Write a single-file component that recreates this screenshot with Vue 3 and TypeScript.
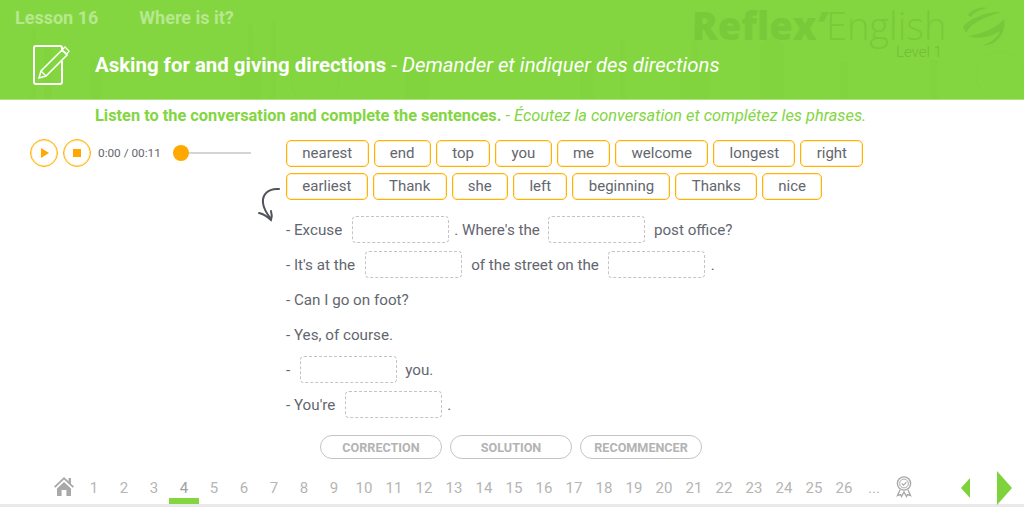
<script setup lang="ts">
const rows: string[][] = [
  ["nearest", "end", "top", "you", "me", "welcome", "longest", "right"],
  ["earliest", "Thank", "she", "left", "beginning", "Thanks", "nice"],
];

type Part = { text?: string; blank?: boolean; cls?: string };
const lines: Part[][] = [
  [{ text: "- Excuse", cls: "r10" }, { blank: true }, { text: ". Where's the", cls: "l5 r8" }, { blank: true }, { text: "post office?", cls: "l9" }],
  [{ text: "- It's at the", cls: "r10" }, { blank: true }, { text: "of the street on the", cls: "l9 r9" }, { blank: true }, { text: ".", cls: "l6" }],
  [{ text: "- Can I go on foot?" }],
  [{ text: "- Yes, of course." }],
  [{ text: "-", cls: "r10" }, { blank: true }, { text: "you.", cls: "l8" }],
  [{ text: "- You're", cls: "r10" }, { blank: true }, { text: ".", cls: "l5" }],
];

const actions = ["CORRECTION", "SOLUTION", "RECOMMENCER"];
const pages = Array.from({ length: 26 }, (_, i) => i + 1);
const current = 4;
</script>

<template>
  <div class="page">
    <header class="banner">
      <svg class="skyline" viewBox="0 0 1024 100" preserveAspectRatio="none">
        <path d="M30 100V30h6v70zM44 100V45h8v55zM90 100V60h12v40zM240 100V60h8V25h5v35h8v40zM270 100V22h6v78zM405 100V70h24v30zM580 100V60h14v40zM620 100V40h6v60zM680 100V70h10l5-50 5 50h10v30zM760 100V45l12-10 12 10v55zM840 100V62h8v38zM930 100V60h8v40z" fill="#7ccf3d" />
        <circle cx="315" cy="82" r="24" fill="none" stroke="#7ccf3d" />
        <circle cx="1000" cy="76" r="24" fill="none" stroke="#7ccf3d" />
      </svg>
      <div class="crumbs">
        <span class="lesson">Lesson 16</span>
        <span>Where is it?</span>
      </div>
      <div class="heading">
        <svg class="note" width="40" height="42" viewBox="0 0 40 42" fill="none" stroke="#fff">
          <path d="M30 17v21a2 2 0 0 1-2 2H4a2 2 0 0 1-2-2V4a2 2 0 0 1 2-2h24a2 2 0 0 1 2 2v4" stroke-width="2" />
          <path d="M7 34l2-7L30 6l5 5-21 21z" stroke-width="1.500" />
          <path d="M9 27l5 5M33 3l4 4-2 3-5-4z" stroke-width="1.300" />
        </svg>
        <h1>Asking for and giving directions <span class="dash">-</span> <em>Demander et indiquer des directions</em></h1>
      </div>
      <div class="logo">
        <span class="brand"><b>Reflex</b><i>’</i>English</span>
        <svg class="swoosh" width="44" height="44" viewBox="0 0 44 44" fill="#76c93b">
          <path d="M7 12C10 7 20 3 27 5C20 6 13 9 10 14Z" />
          <path d="M2 24C8 15 28 8 40 9C30 13 12 17 5 30Z" />
          <path d="M7 33C20 32 36 24 43 16C46 30 34 44 22 42C30 40 37 34 39 28C32 33 18 37 7 33Z" />
        </svg>
        <span class="level">Level 1</span>
      </div>
    </header>

    <p class="instruction"><b>Listen to the conversation and complete the sentences.</b> - <em>Écoutez la conversation et complétez les phrases.</em></p>

    <main class="body">
      <aside class="player">
        <button class="round"><span class="play"></span></button>
        <button class="round"><span class="stop"></span></button>
        <span class="time">0:00 / 00:11</span>
        <div class="track"><span class="thumb"></span></div>
      </aside>

      <section class="exercise">
        <svg class="arrow" width="24" height="36" viewBox="0 0 24 36" fill="none" stroke="#50535a" stroke-width="2" stroke-linecap="round">
          <path d="M22 2C12 1 5 7 6 16c.6 6 4 11 8 16" />
          <path d="M2 26c4 1 8 3 12 7 1-3 1-6 0-9" />
        </svg>
        <div class="bank">
          <div v-for="(row, r) in rows" :key="r" class="chips">
            <span v-for="word in row" :key="word" class="chip">{{ word }}</span>
          </div>
        </div>
        <div class="lines">
          <div v-for="(line, i) in lines" :key="i" class="line">
            <template v-for="(part, j) in line" :key="j">
              <span v-if="part.blank" class="blank"></span>
              <span v-else :class="part.cls">{{ part.text }}</span>
            </template>
          </div>
        </div>
        <div class="actions">
          <button v-for="a in actions" :key="a" class="action">{{ a }}</button>
        </div>
      </section>
    </main>

    <nav class="pager">
      <svg class="home" width="20" height="20" viewBox="0 0 20 20" fill="#a9a9a9">
        <path d="M10 1L0 10.500l1.300 1.200L10 3.600l8.700 8.100 1.300-1.200-3-2.800V2h-2.400v3.300z" />
        <path d="M3 12.500L10 6l7 6.500V20h-4.600v-6H7.600v6H3z" />
      </svg>
      <div class="nums">
        <span v-for="p in pages" :key="p" class="num" :class="{ on: p === current }">{{ p }}</span>
        <span class="num dots">...</span>
      </div>
      <svg class="badge" width="16" height="22" viewBox="0 0 16 22" fill="none" stroke="#a9a9a9">
        <circle cx="8" cy="7.500" r="6.600" stroke-width="1.400" />
        <circle cx="8" cy="7.500" r="4.400" stroke-width="1" />
        <path d="M5.800 7.500l1.700 1.700 3-3" stroke-width="1.200" />
        <path d="M4 14l-2.500 5.500 3-1 1 2L8 16l2.500 4.500 1-2 3 1L12 14" stroke-width="1.400" />
      </svg>
      <span class="prev"></span>
      <span class="next"></span>
    </nav>
  </div>
</template>

<style scoped>
.page {
  width: 1024px;
  height: 507px;
  display: flex;
  flex-direction: column;
  overflow: hidden;
  background: #fff;
  font-family: Roboto, "Liberation Sans", sans-serif;
  color: #63666e;
}

.banner {
  position: relative;
  height: 100px;
  flex: none;
  background: #83d63f;
  border-bottom: 1px solid #a8e57a;
  box-sizing: border-box;
}

.skyline {
  position: absolute;
  inset: 0;
  width: 100%;
  height: 100%;
  opacity: 0.25;
}

.crumbs {
  position: relative;
  display: flex;
  gap: 41px;
  padding: 8px 0 0 15px;
  font-size: 18px;
  line-height: 19px;
  font-weight: 700;
  color: #b7e88f;
}

.heading {
  position: relative;
  display: flex;
  align-items: center;
  margin-top: 17px;
  padding-left: 32px;
}

.note {
  flex: none;
}

h1 {
  margin: 0 0 0 23px;
  font-size: 20.4px;
  line-height: 26px;
  font-weight: 700;
  color: #fff;
  white-space: nowrap;
}

h1 em {
  font-weight: 400;
}

.dash {
  font-weight: 400;
}

.logo {
  position: absolute;
  left: 692px;
  top: 7px;
  display: flex;
  align-items: flex-start;
  color: #78ca3b;
}

.brand {
  font-size: 38px;
  line-height: 36px;
  font-weight: 300;
  white-space: nowrap;
  font-family: "Open Sans", sans-serif;
  margin-right: 15px;
}

.brand b {
  font-weight: 800;
}

.brand i {
  font-weight: 800;
  font-style: italic;
}

.swoosh {
  margin-top: -4px;
}

.level {
  position: absolute;
  left: 204px;
  top: 36px;
  font-size: 15px;
  line-height: 18px;
  font-weight: 300;
  color: #6fbe37;
}

.instruction {
  margin: 7px 0 0 95px;
  font-size: 16.35px;
  line-height: 18px;
  color: #83d63f;
  white-space: nowrap;
}

.body {
  display: flex;
  flex: 1;
  min-height: 0;
}

.player {
  width: 286px;
  flex: none;
  box-sizing: border-box;
  padding: 14px 0 0 30px;
  display: flex;
  align-items: flex-start;
  gap: 5px;
}

.round {
  width: 28px;
  height: 28px;
  padding: 0;
  flex: none;
  border: 1px solid #ffb300;
  border-radius: 50%;
  background: #fff;
  box-shadow: inset 0 0 0 1px #ffe3a6;
  display: flex;
  align-items: center;
  justify-content: center;
}

.play {
  width: 0;
  height: 0;
  margin-left: 2px;
  border-left: 8px solid #ffa800;
  border-top: 5.5px solid transparent;
  border-bottom: 5.5px solid transparent;
}

.stop {
  width: 8px;
  height: 8px;
  background: #ffa800;
}

.time {
  margin-left: 2px;
  font-size: 11.8px;
  line-height: 28px;
  white-space: nowrap;
}

.track {
  position: relative;
  width: 78px;
  height: 2px;
  margin: 13px 0 0 7px;
  background: #d5d5d5;
}

.thumb {
  position: absolute;
  left: 0;
  top: -7px;
  width: 16px;
  height: 16px;
  border-radius: 50%;
  background: #ffa800;
}

.exercise {
  position: relative;
  flex: 1;
  padding-top: 15px;
}

.arrow {
  position: absolute;
  left: -29px;
  top: 62px;
}

.bank {
  display: flex;
  flex-direction: column;
  gap: 6px;
}

.chips {
  display: flex;
  gap: 5px;
}

.chip {
  box-sizing: border-box;
  height: 27px;
  padding: 0 15.3px;
  border: 1px solid #ffb300;
  border-radius: 5px;
  box-shadow: inset 0 0 0 1px #ffeec9;
  font-size: 15px;
  line-height: 25px;
}

.lines {
  margin-top: 16px;
  display: flex;
  flex-direction: column;
  gap: 8px;
}

.line {
  height: 27px;
  display: flex;
  align-items: center;
  font-size: 15.2px;
}

.blank {
  box-sizing: border-box;
  width: 97px;
  height: 27px;
  border: 1px dashed #c4c4c4;
  border-radius: 4px;
}

.r8 { margin-right: 8px; }
.r9 { margin-right: 9px; }
.r10 { margin-right: 10px; }
.l5 { margin-left: 5px; }
.l6 { margin-left: 6px; }
.l8 { margin-left: 8px; }
.l9 { margin-left: 9px; }

.actions {
  display: flex;
  gap: 8px;
  margin: 17px 0 0 34px;
}

.action {
  width: 122px;
  height: 24px;
  padding: 0;
  box-sizing: border-box;
  border: 1px solid #c4c4c4;
  border-radius: 12px;
  background: #fff;
  font-family: inherit;
  font-size: 12.6px;
  font-weight: 700;
  color: #b3b3b3;
}

.pager {
  position: relative;
  height: 37px;
  flex: none;
  box-sizing: border-box;
  border-bottom: 3px solid #e9e9e9;
  display: flex;
  align-items: flex-start;
}

.home {
  position: absolute;
  left: 54px;
  top: 6px;
}

.nums {
  position: absolute;
  left: 79px;
  top: 0;
  display: flex;
}

.num {
  width: 30px;
  height: 34px;
  box-sizing: border-box;
  text-align: center;
  font-size: 15px;
  line-height: 37px;
  color: #b5b5b5;
}

.num.on {
  border-bottom: 6px solid #83d63f;
  color: #a0a0a0;
}

.badge {
  position: absolute;
  left: 896px;
  top: 6px;
}

.prev {
  position: absolute;
  left: 961px;
  top: 8px;
  border-right: 9px solid #7ed33c;
  border-top: 10px solid transparent;
  border-bottom: 10px solid transparent;
}

.next {
  position: absolute;
  left: 997px;
  top: 1px;
  border-left: 15px solid #7ed33c;
  border-top: 17px solid transparent;
  border-bottom: 17px solid transparent;
}
</style>
